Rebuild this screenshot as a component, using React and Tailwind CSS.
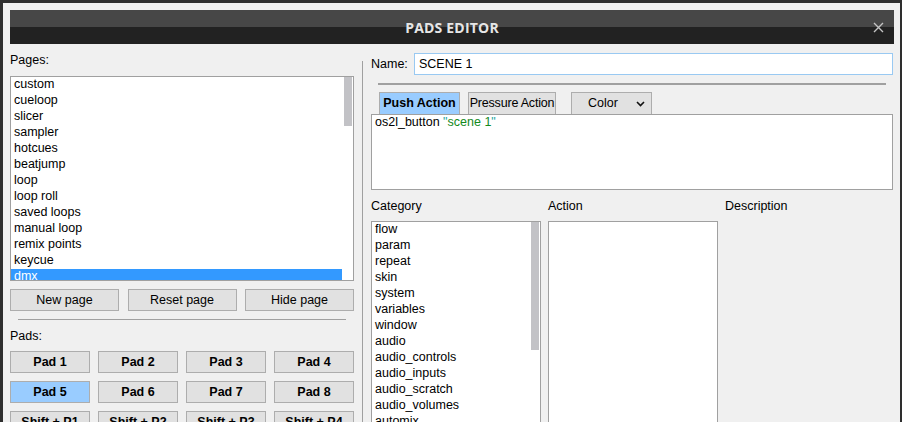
import React from "react";

const pages = [
  "custom", "cueloop", "slicer", "sampler", "hotcues", "beatjump", "loop",
  "loop roll", "saved loops", "manual loop", "remix points", "keycue", "dmx",
];

const categories = [
  "flow", "param", "repeat", "skin", "system", "variables", "window", "audio",
  "audio_controls", "audio_inputs", "audio_scratch", "audio_volumes", "automix",
];

const pads = [
  "Pad 1", "Pad 2", "Pad 3", "Pad 4",
  "Pad 5", "Pad 6", "Pad 7", "Pad 8",
  "Shift + P1", "Shift + P2", "Shift + P3", "Shift + P4",
];

const PlainButton = ({ label }) => (
  <button className="h-[22px] w-[109px] border border-[#adadad] bg-[#e1e1e1] text-[12.5px] text-black leading-none">
    {label}
  </button>
);

export default function App() {
  return (
    <div className="w-[902px] h-[422px] overflow-hidden bg-[#2e2e2e] pt-[3px] pl-[3px] font-['Liberation_Sans',Arial,sans-serif] text-[12px] text-black">
      <div className="w-[897px] h-[425px] bg-[#f0f0f0] pt-[7px] pl-[7px]">
        {/* title bar */}
        <div className="relative w-[884px] h-[34px] flex flex-col">
          <div className="h-[17px] bg-[#474747]" />
          <div className="h-[17px] bg-[#222222]" />
          <div className="absolute inset-0 flex items-center justify-center">
            <span className="font-['Open_Sans',sans-serif] font-bold text-[14px] text-[#e6e6e6] tracking-[0.2px]">PADS EDITOR</span>
          </div>
          <svg className="absolute right-[10px] top-[12px]" width="11" height="11" viewBox="0 0 11 11">
            <path d="M1 1 L10 10 M10 1 L1 10" stroke="#c4c4c4" strokeWidth="1.4" />
          </svg>
        </div>

        <div className="flex">
          {/* left pane */}
          <div className="w-[344px] flex flex-col">
            <div className="h-[14px] mt-[9px] leading-[14px] text-[12.5px]">Pages:</div>
            <div className="mt-[9px] h-[205px] border border-[#a0a0a0] bg-white flex overflow-hidden">
              <div className="flex-1 flex flex-col">
                {pages.map((p) => (
                  <div
                    key={p}
                    className={`h-[16px] shrink-0 leading-[15px] pl-[3px] text-[12.5px] ${p === "dmx" ? "bg-[#3399ff] text-white" : ""}`}
                  >
                    {p}
                  </div>
                ))}
              </div>
              <div className="w-[11px] bg-white flex justify-center">
                <div className="w-[8px] h-[49px] bg-[#c2c2c6]" />
              </div>
            </div>
            <div className="mt-[8px] flex justify-between">
              <PlainButton label="New page" />
              <PlainButton label="Reset page" />
              <PlainButton label="Hide page" />
            </div>
            <div className="mt-[8px] mx-[8px] h-px bg-[#a0a0a0]" />
            <div className="mt-[9px] h-[14px] leading-[14px] text-[12.5px]">Pads:</div>
            <div className="mt-[8px] grid grid-cols-4 gap-x-[8px] gap-y-[8px]">
              {pads.map((p) => (
                <button
                  key={p}
                  className={`h-[22px] border border-[#adadad] text-[12.5px] font-bold leading-none whitespace-nowrap ${p === "Pad 5" ? "bg-[#99ccff]" : "bg-[#e1e1e1]"}`}
                >
                  {p}
                </button>
              ))}
            </div>
          </div>

          {/* separator */}
          <div className="ml-[8px] mt-[17px] w-px h-[400px] bg-[#a0a0a0]" />

          {/* right pane */}
          <div className="ml-[8px] w-[522px] flex flex-col">
            <div className="mt-[9px] flex items-center">
              <span className="w-[43px] text-[12.5px]">Name:</span>
              <div className="flex-1 h-[22px] border border-[#99c9f2] bg-white pl-[4px] flex items-center text-[12.5px]">
                SCENE 1
              </div>
            </div>
            <div className="mt-[8px] ml-[7px] w-[508px] h-[2px] bg-[#a0a0a0]" />
            <div className="mt-[7px] ml-[8px] flex items-end gap-[8px]">
              <div className="w-[81px] h-[22px] border border-[#adadad] border-b-0 bg-[#99ccff] font-bold flex items-center justify-center text-[12.5px] whitespace-nowrap">
                Push Action
              </div>
              <div className="w-[88px] h-[22px] border border-[#adadad] border-b-0 bg-[#e1e1e1] flex items-center justify-center text-[12.5px] tracking-[-0.2px] whitespace-nowrap">
                Pressure Action
              </div>
              <div className="ml-[7px] w-[81px] h-[22px] border border-[#adadad] border-b-0 bg-[#e1e1e1] flex items-center text-[12.5px] pl-[16px]">
                <span>Color</span>
                <svg className="ml-[18px]" width="9" height="6" viewBox="0 0 9 6">
                  <path d="M1 1 L4.5 4.5 L8 1" stroke="#111" strokeWidth="1.6" fill="none" />
                </svg>
              </div>
            </div>
            <div className="h-[76px] border border-[#a0a0a0] bg-white pl-[3px] text-[12.5px] leading-[15px]">
              os2l_button <span className="text-[#1aa5a0]">"</span><span className="text-[#138a1c]">scene 1</span><span className="text-[#1aa5a0]">"</span>
            </div>
            <div className="mt-[9px] flex text-[12.5px] h-[14px] leading-[14px]">
              <span className="w-[177px]">Category</span>
              <span className="w-[177px]">Action</span>
              <span>Description</span>
            </div>
            <div className="mt-[8px] flex gap-[7px]">
              <div className="w-[170px] h-[220px] border border-[#a0a0a0] bg-white flex overflow-hidden">
                <div className="flex-1 flex flex-col">
                  {categories.map((c) => (
                    <div key={c} className="h-[16px] shrink-0 leading-[15px] pl-[3px] text-[12.5px]">
                      {c}
                    </div>
                  ))}
                </div>
                <div className="w-[11px] flex justify-center">
                  <div className="w-[8px] h-[128px] bg-[#c2c2c6]" />
                </div>
              </div>
              <div className="w-[170px] h-[220px] border border-[#a0a0a0] bg-white" />
            </div>
          </div>
        </div>
      </div>
    </div>
  );
}
